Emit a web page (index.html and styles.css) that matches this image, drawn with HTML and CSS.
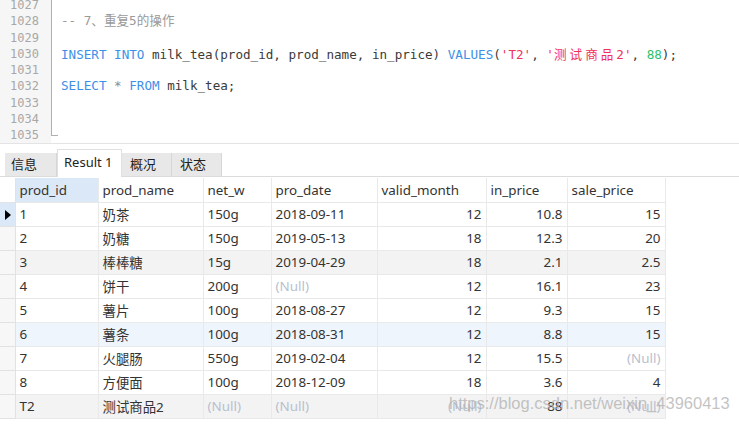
FILE: index.html
```html
<!DOCTYPE html>
<html>
<head>
<meta charset="utf-8">
<link rel="stylesheet" href="styles.css">
</head>
<body>
<div class="page">
  <div class="editor">
    <div class="gutter">
      <div class="lines">
        <div>1027</div><div>1028</div><div>1029</div><div>1030</div><div>1031</div><div>1032</div><div>1033</div><div>1034</div><div>1035</div>
      </div>
      <div class="fold"></div>
    </div>
    <div class="code">
      <div class="ln"> </div>
      <div class="ln cm">-- 7、重复5的操作</div>
      <div class="ln"> </div>
      <div class="ln"><span class="kw">INSERT</span> <span class="kw">INTO</span> milk_tea(prod_id, prod_name, in_price) <span class="kw">VALUES</span>(<span class="str">'T2'</span>, <span class="str">'<span class="cjk">测试商品</span>2'</span>, <span class="num">88</span>);</div>
      <div class="ln"> </div>
      <div class="ln"><span class="kw">SELECT</span> <span class="op">*</span> <span class="kw">FROM</span> milk_tea;</div>
      <div class="ln"> </div>
      <div class="ln"> </div>
      <div class="ln"> </div>
    </div>
  </div>
  <div class="tabbar">
    <div class="tab t1">信息</div>
    <div class="tab active">Result 1</div>
    <div class="tab t3">概况</div>
    <div class="tab t3">状态</div>
  </div>
  <div class="gridwrap">
    <table class="grid">
      <colgroup>
        <col class="c0"><col class="c1"><col class="c2"><col class="c3"><col class="c4"><col class="c5"><col class="c6"><col class="c7">
      </colgroup>
      <thead>
        <tr><th class="rh"></th><th class="sel">prod_id</th><th>prod_name</th><th>net_w</th><th>pro_date</th><th>valid_month</th><th>in_price</th><th>sale_price</th></tr>
      </thead>
      <tbody>
        <tr><td class="rh cur"><span class="arrow"></span></td><td>1</td><td>奶茶</td><td>150g</td><td>2018-09-11</td><td class="r">12</td><td class="r">10.8</td><td class="r">15</td></tr>
        <tr><td class="rh"></td><td>2</td><td>奶糖</td><td>150g</td><td>2019-05-13</td><td class="r">18</td><td class="r">12.3</td><td class="r">20</td></tr>
        <tr class="gray"><td class="rh"></td><td>3</td><td>棒棒糖</td><td>15g</td><td>2019-04-29</td><td class="r">18</td><td class="r">2.1</td><td class="r">2.5</td></tr>
        <tr><td class="rh"></td><td>4</td><td>饼干</td><td>200g</td><td class="null">(Null)</td><td class="r">12</td><td class="r">16.1</td><td class="r">23</td></tr>
        <tr><td class="rh"></td><td>5</td><td>薯片</td><td>100g</td><td>2018-08-27</td><td class="r">12</td><td class="r">9.3</td><td class="r">15</td></tr>
        <tr class="blue"><td class="rh"></td><td>6</td><td>薯条</td><td>100g</td><td>2018-08-31</td><td class="r">12</td><td class="r">8.8</td><td class="r">15</td></tr>
        <tr><td class="rh"></td><td>7</td><td>火腿肠</td><td>550g</td><td>2019-02-04</td><td class="r">12</td><td class="r">15.5</td><td class="r null">(Null)</td></tr>
        <tr><td class="rh"></td><td>8</td><td>方便面</td><td>100g</td><td>2018-12-09</td><td class="r">18</td><td class="r">3.6</td><td class="r">4</td></tr>
        <tr class="gray"><td class="rh"></td><td>T2</td><td>测试商品2</td><td class="null">(Null)</td><td class="null">(Null)</td><td class="r null">(Null)</td><td class="r">88</td><td class="r null">(Null)</td></tr>
      </tbody>
    </table>
  </div>
  <div class="watermark">https://blog.csdn.net/weixin_43960413</div>
</div>
</body>
</html>
```
FILE: styles.css
```css
html, body {
  margin: 0;
  padding: 0;
  background: #ffffff;
}
.page {
  position: relative;
  width: 739px;
  height: 426px;
  overflow: hidden;
}
.editor {
  display: flex;
  height: 143px;
  overflow: hidden;
  border-bottom: 1px solid #e4e4e4;
  background: #ffffff;
}
.gutter {
  width: 51px;
  flex: none;
  display: flex;
  background: #f6f6f6;
  position: relative;
}
.lines {
  width: 39px;
  margin-top: -3px;
  font-family: "DejaVu Sans Mono", monospace;
  font-size: 12px;
  line-height: 16.25px;
  color: #a8a8a8;
  text-align: right;
}
.fold {
  position: absolute;
  left: 51px;
  top: 0;
  width: 6px;
  height: 135px;
  border-left: 1px solid #b0b0b0;
  border-bottom: 1px solid #b0b0b0;
}
.code {
  margin-top: -3px;
  padding-left: 10px;
  font-family: "DejaVu Sans Mono", monospace;
  font-size: 12.6px;
  color: #3a3a3a;
}
.ln {
  height: 16.25px;
  line-height: 16.25px;
  white-space: pre;
}
.cm { color: #9a9a9a; font-family: "DejaVu Sans Mono", "Noto Sans CJK SC", monospace; }
.kw { color: #3d8fe8; }
.str { color: #f0305c; }
.num { color: #2bbf6a; }
.op { color: #8a8a8a; }
.cjk { font-family: "Noto Sans CJK SC", sans-serif; letter-spacing: 3px; }
.tabbar {
  display: flex;
  align-items: flex-end;
  height: 29px;
  padding-left: 5px;
  margin-top: 3px;
  border-bottom: 1px solid #dcdcdc;
  font-family: "Noto Sans", "Noto Sans CJK SC", sans-serif;
  font-size: 13px;
  color: #222;
}
.tab {
  height: 23px;
  line-height: 22px;
  background: #e8e8e8;
  border-right: 1px solid #d6d6d6;
  box-sizing: border-box;
  white-space: nowrap;
}
.t1 { width: 52px; padding-left: 6px; }
.t3 { width: 50px; padding-left: 8px; }
.tab.active {
  background: #ffffff;
  width: 65px;
  height: 28px;
  line-height: 25px;
  padding-left: 6px;
  border: 1px solid #e0e0e0;
  border-bottom: none;
  margin-bottom: -1px;
}
.gridwrap {
  padding-top: 1px;
}
.grid {
  border-collapse: collapse;
  table-layout: fixed;
  width: 665px;
  font-family: "Noto Sans", "Noto Sans CJK SC", sans-serif;
  font-size: 13.4px;
  color: #333;
}
.c0 { width: 15px; }
.c1 { width: 83px; }
.c2 { width: 105px; }
.c3 { width: 68px; }
.c4 { width: 106px; }
.c5 { width: 109px; }
.c6 { width: 81px; }
.c7 { width: 98px; }
.grid tr { height: 24px; }
.grid th, .grid td {
  height: 24px;
  padding: 0 4px;
  border: 1px solid #e9e9e9;
  white-space: nowrap;
  overflow: hidden;
  text-align: left;
  font-weight: normal;
  box-sizing: border-box;
}
.grid th { border-top: none; }
.grid th.sel { background: #dbe8f7; }
.grid .rh {
  padding: 0;
  background: #f7f7f7;
  border-left: none;
  border-color: #e2e2e2;
}
.grid th.rh { background: #ffffff; }
.grid td.rh.cur { background: #dbe8f7; }
.arrow {
  display: inline-block;
  margin-left: 5px;
  width: 0;
  height: 0;
  border-top: 5px solid transparent;
  border-bottom: 5px solid transparent;
  border-left: 6px solid #000;
  vertical-align: middle;
}
.grid td.r { text-align: right; }
.grid td.null { color: #b8bfd0; }
.grid tr.gray td { background: #f3f3f3; }
.grid tr.blue td { background: #eff5fc; }
.grid tr.gray td.rh, .grid tr.blue td.rh { background: #f7f7f7; }
.watermark {
  position: absolute;
  left: 449px;
  top: 394px;
  font-family: "Liberation Sans", Arial, sans-serif;
  font-size: 16.5px;
  color: rgba(175, 175, 175, 0.75);
  white-space: nowrap;
}
```
